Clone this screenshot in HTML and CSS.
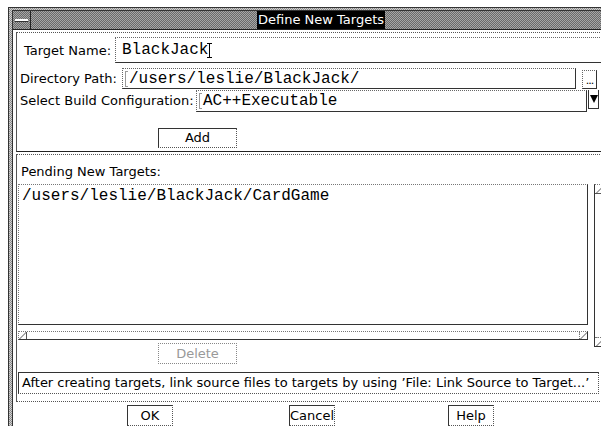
FILE: index.html
```html
<!DOCTYPE html>
<html lang="en">
<head>
<meta charset="utf-8">
<title>Define New Targets</title>
<link rel="stylesheet" href="styles.css">
</head>
<body>
<div class="window">
  <div class="frame">
    <div class="titlebar">
      <div class="menu-btn"><span class="menu-bar"></span></div>
      <div class="title-area"><span class="title">Define New Targets</span></div>
    </div>

    <div class="body">
      <section class="panel panel-top">
        <div class="row row-name">
          <label class="lbl lbl-name">Target Name:</label>
          <div class="field field-name"><span class="value">BlackJack</span><span class="ibeam"></span></div>
        </div>
        <div class="row row-dir">
          <label class="lbl lbl-dir">Directory Path:</label>
          <div class="field field-dir"><span class="caret"></span>/users/leslie/BlackJack/</div>
          <div class="browse-btn">...</div>
        </div>
        <div class="row row-config">
          <label class="lbl lbl-config">Select Build Configuration:</label>
          <div class="field field-config"><span class="caret"></span>AC++Executable</div>
          <div class="combo-arrow"><span class="tri"></span></div>
        </div>
        <div class="btn btn-add">Add</div>
      </section>

      <section class="panel panel-bottom">
        <div class="lbl lbl-pending">Pending New Targets:</div>
        <div class="list-row">
          <div class="list-col">
            <div class="listbox">/users/leslie/BlackJack/CardGame</div>
            <div class="hscroll">
              <span class="arrow-box arrow-left"></span>
              <span class="trough"></span>
              <span class="arrow-box arrow-right"></span>
            </div>
            <div class="btn btn-delete">Delete</div>
          </div>
          <div class="vscroll">
            <span class="arrow-box arrow-up"></span>
            <span class="arrow-box arrow-down"></span>
          </div>
        </div>
        <div class="message">After creating targets, link source files to targets by using ’File: Link Source to Target...’</div>
      </section>

      <div class="actions">
        <div class="btn btn-action">OK</div>
        <div class="btn btn-action">Cancel</div>
        <div class="btn btn-action">Help</div>
      </div>
    </div>
  </div>
</div>
</body>
</html>
```

FILE: styles.css
```css
html, body {
  margin: 0;
  padding: 0;
  overflow: hidden;
  background: #fff;
}

body {
  width: 601px;
  height: 426px;
  font-family: "DejaVu Sans", "Liberation Sans", sans-serif;
  font-size: 13px;
  color: #000;
}

/* Motif-style window frame */
.window {
  margin: 7px 0 0 8px;
  width: 640px;
  height: 420px;
  border-top: 1px solid #333;
  border-left: 1px solid #333;
  padding: 2px 0 0 3px;
  background: repeating-conic-gradient(#8a8a8a 0% 25%, #d0d0d0 0% 50%) 0 0 / 2px 2px;
}

.frame {
  height: 100%;
  border-top: 1px solid #333;
  border-left: 1px solid #333;
  background: #fff;
}

.titlebar {
  display: flex;
  height: 18px;
  border-bottom: 1px solid #222;
  background: repeating-conic-gradient(#6a6a6a 0% 25%, #a6a6a6 0% 50%) 0 0 / 2px 2px;
}

.menu-btn {
  width: 17px;
  border-right: 1px solid #222;
  display: flex;
  align-items: center;
  justify-content: center;
}

.menu-bar {
  display: block;
  width: 13px;
  height: 2px;
  background: #fff;
  border-bottom: 1px solid #333;
}

.title-area {
  flex: 1;
  display: flex;
  align-items: center;
}

.title {
  margin-left: 226px;
  padding: 0 1px;
  height: 18px;
  line-height: 18px;
  background: #000;
  color: #fff;
}

.body {
  padding: 2px 0 0 3px;
}

/* Group panels */
.panel {
  border-top: 1px dotted #555;
  border-left: 1px solid #555;
}

.panel-top {
  border-bottom: 1px solid #222;
  padding: 4px 0 3px 0;
}

.panel-bottom {
  margin-top: 2px;
  border-bottom: 1px dotted #555;
  padding: 8px 0 7px 1px;
}

.row {
  display: flex;
  align-items: center;
}

.row-name {
  padding-left: 7px;
  height: 26px;
}

.row-dir,
.row-config {
  padding-left: 3px;
  align-items: flex-start;
}

.row-dir {
  margin-top: 5px;
}

.lbl {
  white-space: nowrap;
  font-size: 13px;
}

.lbl-name { width: 91px; }
.lbl-dir { width: 102px; line-height: 22px; }
.lbl-config { width: 176px; line-height: 22px; }

/* Text fields: etched top/left, dark bottom/right */
.field {
  box-sizing: border-box;
  font-family: "Liberation Mono", "DejaVu Sans Mono", monospace;
  font-size: 16px;
  white-space: nowrap;
  overflow: hidden;
  border-top: 1px dotted #666;
  border-left: 1px dotted #666;
  border-bottom: 1px solid #333;
  border-right: 1px solid #333;
  display: flex;
  align-items: center;
}

.field-name {
  flex: 1;
  height: 26px;
  padding-left: 6px;
  border-right: none;
}

.field-dir {
  width: 454px;
  height: 21px;
  padding-left: 2px;
}

.field-config {
  width: 391px;
  height: 22px;
  padding-left: 2px;
}

.ibeam {
  display: inline-block;
  width: 5px;
  height: 15px;
  margin-left: -1px;
  box-sizing: border-box;
  border-top: 1px solid #000;
  border-bottom: 1px solid #000;
  background: linear-gradient(#000, #000) center / 1px 100% no-repeat;
}

.caret {
  display: inline-block;
  width: 3px;
  height: 16px;
  margin-right: 1px;
  box-sizing: border-box;
  border-left: 1px solid #999;
  border-top: 1px solid #999;
  border-bottom: 1px solid #999;
}

.browse-btn {
  box-sizing: border-box;
  margin: 2px 0 0 6px;
  width: 15px;
  height: 19px;
  border-top: 1px dotted #666;
  border-left: 1px dotted #666;
  border-bottom: 1px solid #333;
  border-right: 1px solid #333;
  font-size: 11px;
  line-height: 20px;
  text-align: center;
  letter-spacing: -1px;
}

.combo-arrow {
  box-sizing: border-box;
  width: 11px;
  height: 19px;
  margin-left: 1px;
  border-left: 1px solid #333;
  border-right: 1px solid #333;
  border-bottom: 1px solid #333;
  display: flex;
  justify-content: center;
  padding-top: 5px;
}

.tri {
  width: 0;
  height: 0;
  border-left: 4px solid transparent;
  border-right: 4px solid transparent;
  border-top: 8px solid #000;
}

/* Push buttons */
.btn {
  box-sizing: border-box;
  text-align: center;
  border-top: 1px solid #333;
  border-left: 1px solid #333;
  border-bottom: 1px dotted #555;
  border-right: 1px dotted #555;
}

.btn-add {
  margin: 16px 0 0 141px;
  width: 79px;
  height: 20px;
  line-height: 18px;
}

.lbl-pending {
  padding-left: 3px;
  line-height: 18px;
  margin-bottom: 3px;
}

.list-row {
  display: flex;
  align-items: flex-start;
}

.list-col {
  width: 570px;
}

.listbox {
  box-sizing: border-box;
  height: 141px;
  padding: 1px 3px;
  font-family: "Liberation Mono", "DejaVu Sans Mono", monospace;
  font-size: 16px;
  line-height: 20px;
  border-top: 1px dotted #777;
  border-left: 1px dotted #777;
  border-bottom: 1px solid #333;
  border-right: 1px solid #333;
}

.hscroll {
  box-sizing: border-box;
  margin-top: 6px;
  height: 9px;
  display: flex;
  border-top: 1px dotted #777;
  border-left: 1px dotted #777;
  border-bottom: 1px solid #333;
  border-right: 1px solid #333;
}

.trough {
  flex: 1;
}

.arrow-box {
  box-sizing: border-box;
  display: block;
  width: 8px;
  height: 7px;
  background: linear-gradient(135deg, transparent 45%, #aaa 45%, #aaa 60%, transparent 60%);
}

.arrow-left { border-right: 1px solid #555; }
.arrow-right { border-left: 1px dotted #777; }

.btn-delete {
  margin: 3px 0 0 140px;
  width: 79px;
  height: 21px;
  line-height: 19px;
  color: #999;
  border: 1px dotted #888;
}

.vscroll {
  box-sizing: border-box;
  margin-left: 6px;
  width: 12px;
  height: 163px;
  border-top: 1px dotted #777;
  border-left: 1px solid #333;
  border-bottom: 1px solid #333;
  display: flex;
  flex-direction: column;
  justify-content: space-between;
}

.arrow-up {
  width: 10px;
  height: 9px;
  border-bottom: 1px solid #555;
}

.arrow-down {
  width: 10px;
  height: 9px;
  border-top: 1px dotted #777;
}

.message {
  box-sizing: border-box;
  margin-top: 8px;
  width: 581px;
  height: 22px;
  padding-left: 3px;
  line-height: 20px;
  white-space: nowrap;
  overflow: hidden;
  border-top: 1px solid #333;
  border-left: 1px solid #333;
  border-bottom: 1px dotted #555;
  border-right: 1px dotted #555;
}

.actions {
  display: flex;
  gap: 116px;
  margin-top: 3px;
  padding-left: 111px;
}

.btn-action {
  width: 46px;
  height: 21px;
  line-height: 19px;
}

.btn-action + .btn-action + .btn-action {
  margin-left: -3px;
}
```
